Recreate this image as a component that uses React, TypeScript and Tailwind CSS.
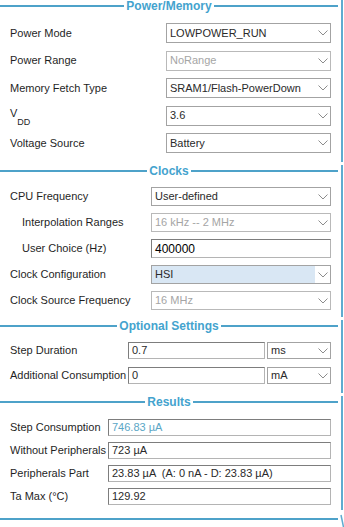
import clsx from "clsx";
import type { ReactNode } from "react";

const LINE = "bg-[#4ea2c9]";

function Chevron() {
  return (
    <svg width="10" height="6" viewBox="0 0 10 6" className="shrink-0">
      <polyline points="0.5,0.5 5,5 9.5,0.5" fill="none" stroke="#8c8c8c" strokeWidth="1" />
    </svg>
  );
}

function Select({ value, disabled, highlight, className }: { value: string; disabled?: boolean; highlight?: boolean; className?: string }) {
  return (
    <div className={clsx("flex items-stretch border bg-white", disabled ? "border-[#b9b9b9]" : "border-[#a3a3a3]", className)}>
      <div
        className={clsx(
          "flex-1 flex items-center pl-[3px] text-[11px] whitespace-nowrap overflow-hidden",
          disabled ? "text-[#a5a5a5]" : "text-[#2a2a2a]",
          highlight && "bg-[#d9e7f4]"
        )}
      >
        {value}
      </div>
      <div className="w-[15px] flex items-center justify-end pr-[2px]">
        <Chevron />
      </div>
    </div>
  );
}

function TextBox({ value, className, big, tint }: { value: string; className?: string; big?: boolean; tint?: boolean }) {
  return (
    <div
      className={clsx(
        "flex items-center pl-[3px] border border-[#b4b4b4] border-t-[#7d7d7d] border-l-[#7d7d7d] bg-white whitespace-pre overflow-hidden",
        big ? "text-[12px] text-black" : "text-[11px]",
        tint ? "text-[#5aa6c6]" : !big && "text-[#2a2a2a]",
        className
      )}
    >
      {value}
    </div>
  );
}

function Header({ title }: { title?: string }) {
  return (
    <div className="flex items-center h-[12px] w-[338px]">
      <div className={clsx("flex-1 h-[2px]", LINE)} />
      {title && <span className="px-[2px] text-[12px] font-bold leading-none text-[#44a3ce]">{title}</span>}
      <div className={clsx("flex-1 h-[2px]", LINE)} />
    </div>
  );
}

function Section({ title, children, body }: { title?: string; children?: ReactNode; body: string }) {
  return (
    <div className="flex">
      <div className="w-[338px]">
        <Header title={title} />
        {children && <div className={clsx("flex flex-col", body)}>{children}</div>}
      </div>
      <div className="ml-[3px] w-[2px] mb-[3px] bg-[#5eabd0]" />
    </div>
  );
}

function Row({ label, width, indent, children, h }: { label: ReactNode; width: string; indent?: boolean; children: ReactNode; h: string }) {
  return (
    <div className={clsx("flex items-stretch", h)}>
      <div className={clsx("flex items-center shrink-0 whitespace-nowrap text-[11px] text-[#1f1f1f]", width, indent ? "pl-[22px]" : "pl-[10px]")}>
        {label}
      </div>
      {children}
    </div>
  );
}

export default function App() {
  return (
    <div className="w-[344px] h-[527px] overflow-hidden bg-white font-['Liberation_Sans',Arial,sans-serif]">
      {/* Power / Memory */}
      <Section title="Power/Memory" body="pt-[11px] pb-[12px] gap-[7.5px]">
        <Row label="Power Mode" width="w-[166px]" h="h-[20px]">
          <Select value="LOWPOWER_RUN" className="w-[165px]" />
        </Row>
        <Row label="Power Range" width="w-[166px]" h="h-[20px]">
          <Select value="NoRange" disabled className="w-[165px]" />
        </Row>
        <Row label="Memory Fetch Type" width="w-[166px]" h="h-[20px]">
          <Select value="SRAM1/Flash-PowerDown" className="w-[165px]" />
        </Row>
        <Row
          label={
            <span className="relative top-[-2px]">
              V<sub className="text-[9px] align-[-5px]">DD</sub>
            </span>
          }
          width="w-[166px]"
          h="h-[20px]"
        >
          <Select value="3.6" className="w-[165px]" />
        </Row>
        <Row label="Voltage Source" width="w-[166px]" h="h-[20px]">
          <Select value="Battery" className="w-[165px]" />
        </Row>
      </Section>

      {/* Clocks */}
      <Section title="Clocks" body="pt-[10px] pb-[10px] gap-[7px]">
        <Row label="CPU Frequency" width="w-[151px]" h="h-[19px]">
          <Select value="User-defined" className="w-[180px]" />
        </Row>
        <Row label="Interpolation Ranges" width="w-[151px]" indent h="h-[19px]">
          <Select value="16 kHz -- 2 MHz" disabled className="w-[180px]" />
        </Row>
        <Row label="User Choice (Hz)" width="w-[151px]" indent h="h-[19px]">
          <TextBox value="400000" big className="w-[180px]" />
        </Row>
        <Row label="Clock Configuration" width="w-[151px]" h="h-[19px]">
          <Select value="HSI" highlight className="w-[180px]" />
        </Row>
        <Row label="Clock Source Frequency" width="w-[151px]" h="h-[19px]">
          <Select value="16 MHz" disabled className="w-[180px]" />
        </Row>
      </Section>

      {/* Optional Settings */}
      <Section title="Optional Settings" body="pt-[10px] pb-[12px] gap-[8px]">
        <Row label="Step Duration" width="w-[128px]" h="h-[17px]">
          <TextBox value="0.7" className="w-[137px]" />
          <Select value="ms" className="ml-[2px] w-[64px]" />
        </Row>
        <Row label="Additional Consumption" width="w-[128px]" h="h-[17px]">
          <TextBox value="0" className="w-[137px]" />
          <Select value="mA" className="ml-[2px] w-[64px]" />
        </Row>
      </Section>

      {/* Results */}
      <Section title="Results" body="pt-[11px] pb-[8px] gap-[6px]">
        <Row label="Step Consumption" width="w-[108px]" h="h-[17px]">
          <TextBox value="746.83 µA" tint className="w-[223px] border-[#a8a8a8]" />
        </Row>
        <Row label="Without Peripherals" width="w-[108px]" h="h-[17px]">
          <TextBox value="723 µA" className="w-[223px] border-[#a8a8a8]" />
        </Row>
        <Row label="Peripherals Part" width="w-[108px]" h="h-[17px]">
          <TextBox value="23.83 µA  (A: 0 nA - D: 23.83 µA)" className="w-[223px] border-[#a8a8a8]" />
        </Row>
        <Row label="Ta Max (°C)" width="w-[108px]" h="h-[17px]">
          <TextBox value="129.92" className="w-[223px] border-[#a8a8a8]" />
        </Row>
      </Section>

      {/* next (collapsed) section */}
      <div className="flex">
        <div className="w-[338px]">
          <Header />
        </div>
        <svg width="6" height="14" viewBox="0 0 6 14" className="shrink-0">
          <line x1="3" y1="2" x2="5.5" y2="14" stroke="#5eabd0" strokeWidth="1.5" />
        </svg>
      </div>
    </div>
  );
}
